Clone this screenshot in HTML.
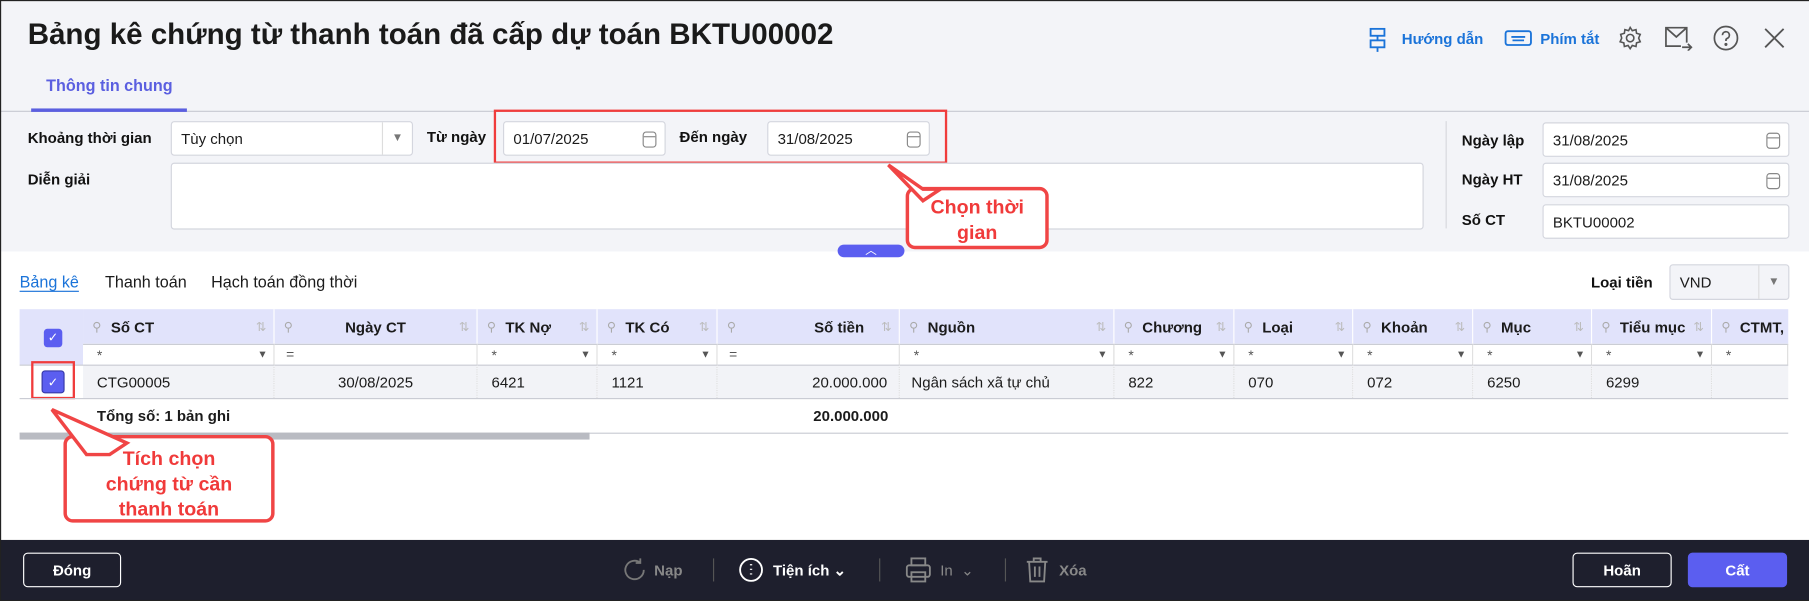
<!DOCTYPE html>
<html><head><meta charset="utf-8"><style>
*{box-sizing:border-box;margin:0;padding:0}
html,body{width:1809px;height:601px;overflow:hidden;background:#fff}
#w{position:absolute;left:0;top:0;width:1568px;height:521px;transform:scale(1.15370);transform-origin:0 0;font-family:"Liberation Sans",sans-serif;color:#1b1b1b;background:#fff}
.a{position:absolute}
.hdr{left:0;top:0;width:1568px;height:218px;background:#f3f4f8}
.lbl{font-size:13px;font-weight:bold;color:#111}
.inp{background:#fff;border:1px solid #d4d6de;border-radius:3px;font-size:13px;padding:0 8px;display:flex;align-items:center}
.cal{position:absolute;right:7px;top:8px;width:12px;height:14px;border:1.3px solid #888;border-radius:3px}
.cal:before{content:"";position:absolute;left:0;right:0;top:3px;border-top:1.3px solid #888}
.red{border:2px solid #f03c3c}
.call{background:#fff;border:3px solid #f04545;border-radius:8px;color:#f03a3a;font-weight:bold;font-size:17px;text-align:center;line-height:22px}
.th{top:268px;height:30px;background:#e1e3fb;font-size:13px;font-weight:bold;display:flex;align-items:center;border-right:1px solid #fff}
.fr{top:298px;height:18px;background:#fff;border-top:1px solid #c9cbd3;border-right:1px solid #ddd;font-size:12px;color:#555}
.td{top:316px;height:29px;background:#f2f3f7;font-size:13px;display:flex;align-items:center;border-top:1px solid #c9cbd3;border-right:1px dotted #ddd}
.pin{color:#aaa;font-weight:normal;font-size:11px;margin:0 8px 0 8px}
.srt{position:absolute;right:6px;color:#bbb;font-weight:normal;font-size:11px}
.ft{left:0;top:468px;width:1568px;height:53px;background:#1e1f2d}
.btn{border:1.5px solid #fff;border-radius:4px;color:#fff;font-size:13px;font-weight:bold;display:flex;align-items:center;justify-content:center}
.ftx{color:#fff;font-size:13px;font-weight:bold;top:487px}
.sep{top:484px;width:1px;height:20px;background:#555}
.chk{width:16px;height:16px;background:#5b5ef0;border-radius:3px;color:#fff;font-size:11px;text-align:center;line-height:16px}
</style></head><body><div id="w">
<div class="a hdr"></div>
<div class="a" style="left:0;top:0;width:1568px;height:521px;border:1px solid #222;border-right:none;z-index:5;pointer-events:none"></div>
<div class="a" style="left:24px;top:16px;font-size:25.6px;font-weight:bold;color:#1a1a1a">Bảng kê chứng từ thanh toán đã cấp dự toán BKTU00002</div>
<svg class="a" style="left:1185px;top:24px" width="20" height="22" viewBox="0 0 20 22" fill="none" stroke="#1a73d9" stroke-width="1.6"><rect x="3" y="1" width="12" height="6"/><rect x="3" y="11" width="12" height="6"/><path d="M9 7v4M9 17v4"/></svg>
<div class="a" style="left:1215px;top:26px;color:#1a73d9;font-size:13px;font-weight:bold">Hướng dẫn</div>
<svg class="a" style="left:1304px;top:26px" width="24" height="18" viewBox="0 0 24 18" fill="none" stroke="#1a73d9" stroke-width="1.6"><rect x="1" y="1" width="22" height="12" rx="2"/><path d="M6 6h12M7 9h10"/></svg>
<div class="a" style="left:1335px;top:26px;color:#1a73d9;font-size:13px;font-weight:bold">Phím tắt</div>
<svg class="a" style="left:1402px;top:22px" width="22" height="22" viewBox="0 0 24 24" fill="none" stroke="#555" stroke-width="1.5"><circle cx="12" cy="12" r="3.5"/><path d="M12 2l2 3 3.5-1 .5 3.5 3.5 1-1.5 3.5 1.5 3.5-3.5 1-.5 3.5-3.5-1-2 3-2-3-3.5 1-.5-3.5-3.5-1 1.5-3.5L3 8.5l3.5-1L7 4l3.5 1z"/></svg>
<svg class="a" style="left:1443px;top:22px" width="26" height="22" viewBox="0 0 26 22" fill="none" stroke="#555" stroke-width="1.5"><path d="M19 15V2H1v16h13M1 2l9 8 9-8M15 19h8M20 16l3 3-3 3"/></svg>
<svg class="a" style="left:1485px;top:22px" width="22" height="22" viewBox="0 0 22 22" fill="none" stroke="#555" stroke-width="1.5"><circle cx="11" cy="11" r="10"/><path d="M8 8.5a3 3 0 1 1 4 2.8c-1 .4-1 1-1 2.2"/><circle cx="11" cy="16.5" r=".6" fill="#555"/></svg>
<svg class="a" style="left:1528px;top:23px" width="20" height="20" viewBox="0 0 20 20" stroke="#555" stroke-width="1.6"><path d="M2 2l16 16M18 2L2 18"/></svg>
<div class="a" style="left:40px;top:66px;color:#5b5fe0;font-size:14px;font-weight:bold">Thông tin chung</div>
<div class="a" style="left:0;top:96px;width:1568px;height:1px;background:#c8cad2"></div>
<div class="a" style="left:27px;top:94px;width:135px;height:3px;background:#5b5fe0"></div>
<div class="a lbl" style="left:24px;top:112px">Khoảng thời gian</div>
<div class="a inp" style="left:148px;top:105px;width:210px;height:30px">Tùy chọn<div style="position:absolute;right:0;top:0;width:26px;height:28px;border-left:1px solid #ddd;color:#777;font-size:10px;text-align:center;line-height:28px">▼</div></div>
<div class="a lbl" style="left:370px;top:111px">Từ ngày</div>
<div class="a inp" style="left:436px;top:105px;width:141px;height:30px">01/07/2025<div class="cal"></div></div>
<div class="a lbl" style="left:589px;top:111px">Đến ngày</div>
<div class="a inp" style="left:665px;top:105px;width:141px;height:30px">31/08/2025<div class="cal"></div></div>
<div class="a red" style="left:428px;top:95px;width:393px;height:47px;border-width:2px"></div>
<div class="a lbl" style="left:24px;top:148px">Diễn giải</div>
<div class="a inp" style="left:148px;top:141px;width:1086px;height:58px"></div>
<div class="a" style="left:1253px;top:105px;width:1px;height:93px;background:#d6d8de"></div>
<div class="a lbl" style="left:1267px;top:114px">Ngày lập</div>
<div class="a inp" style="left:1337px;top:106px;width:214px;height:30px">31/08/2025<div class="cal"></div></div>
<div class="a lbl" style="left:1267px;top:148px">Ngày HT</div>
<div class="a inp" style="left:1337px;top:141px;width:214px;height:30px">31/08/2025<div class="cal"></div></div>
<div class="a lbl" style="left:1267px;top:183px">Số CT</div>
<div class="a inp" style="left:1337px;top:177px;width:214px;height:30px">BKTU00002</div>
<div class="a" style="left:726px;top:212px;width:58px;height:11px;background:#5b5ef0;border-radius:6px 6px 6px 6px;color:#fff;font-size:10px;text-align:center;line-height:12px">︿</div>
<svg class="a" style="left:760px;top:140px;z-index:3" width="60" height="40"><path d="M10 3L40 24 55 24 40 34z" fill="#fff" stroke="#f04545" stroke-width="3"/></svg>
<div class="a call" style="left:785px;top:162px;width:124px;height:54px;padding-top:4px;z-index:2">Chọn thời<br>gian</div>
<div class="a" style="left:17px;top:236px;color:#1a73d9;font-size:14px;text-decoration:underline;text-underline-offset:3px">Bảng kê</div>
<div class="a" style="left:91px;top:236px;font-size:14px">Thanh toán</div>
<div class="a" style="left:183px;top:236px;font-size:14px">Hạch toán đồng thời</div>
<div class="a lbl" style="left:1379px;top:237px">Loại tiền</div>
<div class="a inp" style="left:1447px;top:229px;width:104px;height:31px;background:#f3f4f8">VND<div style="position:absolute;right:0;top:0;width:26px;height:29px;border-left:1px solid #ddd;color:#777;font-size:10px;text-align:center;line-height:29px">▼</div></div>

<div class="a" style="left:17px;top:268px;width:55px;height:48px;background:#e1e3fb"></div>
<div class="a chk" style="left:38px;top:285px">✓</div>
<div class="a td" style="left:17px;width:55px;background:#fff;border-right:none"></div>
<div class="a chk" style="left:36px;top:321px;width:20px;height:20px;line-height:20px;border:1.5px solid #3638a8">✓</div>
<div class="a red" style="left:27px;top:313px;width:38px;height:33px;border-width:2px"></div>

<div class="a th" style="left:72px;width:166px"><span class="pin">⚲</span>Số CT<span class="srt">⇅</span></div>
<div class="a th" style="left:238px;width:176px;justify-content:center"><span class="pin" style="position:absolute;left:0">⚲</span>Ngày CT<span class="srt">⇅</span></div>
<div class="a th" style="left:414px;width:104px"><span class="pin">⚲</span>TK Nợ<span class="srt">⇅</span></div>
<div class="a th" style="left:518px;width:104px"><span class="pin">⚲</span>TK Có<span class="srt">⇅</span></div>
<div class="a th" style="left:622px;width:158px;justify-content:flex-end;padding-right:30px"><span class="pin" style="position:absolute;left:0">⚲</span>Số tiền<span class="srt">⇅</span></div>
<div class="a th" style="left:780px;width:186px"><span class="pin">⚲</span>Nguồn<span class="srt">⇅</span></div>
<div class="a th" style="left:966px;width:104px"><span class="pin">⚲</span>Chương<span class="srt">⇅</span></div>
<div class="a th" style="left:1070px;width:103px"><span class="pin">⚲</span>Loại<span class="srt">⇅</span></div>
<div class="a th" style="left:1173px;width:104px"><span class="pin">⚲</span>Khoản<span class="srt">⇅</span></div>
<div class="a th" style="left:1277px;width:103px"><span class="pin">⚲</span>Mục<span class="srt">⇅</span></div>
<div class="a th" style="left:1380px;width:104px"><span class="pin">⚲</span>Tiểu mục<span class="srt">⇅</span></div>
<div class="a th" style="left:1484px;width:66px;border-right:none"><span class="pin">⚲</span>CTMT,</div>

<div class="a fr" style="left:72px;width:166px"><span style="position:absolute;left:12px;top:2px">*</span><span style="position:absolute;right:5px;top:3px;font-size:9px">▼</span></div>
<div class="a fr" style="left:238px;width:176px"><span style="position:absolute;left:10px;top:1px">=</span></div>
<div class="a fr" style="left:414px;width:104px"><span style="position:absolute;left:12px;top:2px">*</span><span style="position:absolute;right:5px;top:3px;font-size:9px">▼</span></div>
<div class="a fr" style="left:518px;width:104px"><span style="position:absolute;left:12px;top:2px">*</span><span style="position:absolute;right:5px;top:3px;font-size:9px">▼</span></div>
<div class="a fr" style="left:622px;width:158px"><span style="position:absolute;left:10px;top:1px">=</span></div>
<div class="a fr" style="left:780px;width:186px"><span style="position:absolute;left:12px;top:2px">*</span><span style="position:absolute;right:5px;top:3px;font-size:9px">▼</span></div>
<div class="a fr" style="left:966px;width:104px"><span style="position:absolute;left:12px;top:2px">*</span><span style="position:absolute;right:5px;top:3px;font-size:9px">▼</span></div>
<div class="a fr" style="left:1070px;width:103px"><span style="position:absolute;left:12px;top:2px">*</span><span style="position:absolute;right:5px;top:3px;font-size:9px">▼</span></div>
<div class="a fr" style="left:1173px;width:104px"><span style="position:absolute;left:12px;top:2px">*</span><span style="position:absolute;right:5px;top:3px;font-size:9px">▼</span></div>
<div class="a fr" style="left:1277px;width:103px"><span style="position:absolute;left:12px;top:2px">*</span><span style="position:absolute;right:5px;top:3px;font-size:9px">▼</span></div>
<div class="a fr" style="left:1380px;width:104px"><span style="position:absolute;left:12px;top:2px">*</span><span style="position:absolute;right:5px;top:3px;font-size:9px">▼</span></div>
<div class="a fr" style="left:1484px;width:66px"><span style="position:absolute;left:12px;top:2px">*</span></div>

<div class="a td" style="left:72px;width:166px;padding-left:12px">CTG00005</div>
<div class="a td" style="left:238px;width:176px;justify-content:center">30/08/2025</div>
<div class="a td" style="left:414px;width:104px;padding-left:12px">6421</div>
<div class="a td" style="left:518px;width:104px;padding-left:12px">1121</div>
<div class="a td" style="left:622px;width:158px;justify-content:flex-end;padding-right:10px">20.000.000</div>
<div class="a td" style="left:780px;width:186px;padding-left:10px">Ngân sách xã tự chủ</div>
<div class="a td" style="left:966px;width:104px;padding-left:12px">822</div>
<div class="a td" style="left:1070px;width:103px;padding-left:12px">070</div>
<div class="a td" style="left:1173px;width:104px;padding-left:12px">072</div>
<div class="a td" style="left:1277px;width:103px;padding-left:12px">6250</div>
<div class="a td" style="left:1380px;width:104px;padding-left:12px">6299</div>
<div class="a td" style="left:1484px;width:66px;border-right:none"></div>
<div class="a" style="left:17px;top:345px;width:1533px;height:1px;background:#c9cbd3"></div>
<div class="a" style="left:84px;top:353px;font-size:13px;font-weight:bold">Tổng số: 1 bản ghi</div>
<div class="a" style="left:622px;top:353px;width:148px;text-align:right;font-size:13px;font-weight:bold">20.000.000</div>
<div class="a" style="left:17px;top:375px;width:1533px;height:1px;background:#c9cbd3"></div>
<div class="a" style="left:17px;top:375px;width:494px;height:6px;background:#b9bbc2"></div>
<svg class="a" style="left:40px;top:350px;z-index:3" width="90" height="50"><path d="M5 5L70 34 55 44 35 44z" fill="#fff" stroke="#f04545" stroke-width="3"/></svg>
<div class="a call" style="left:55px;top:377px;width:183px;height:76px;padding-top:7px;z-index:2">Tích chọn<br>chứng từ cần<br>thanh toán</div>

<div class="a ft"></div>
<div class="a btn" style="left:20px;top:479px;width:85px;height:30px">Đóng</div>
<svg class="a" style="left:538px;top:482px" width="24" height="24" viewBox="0 0 24 24" fill="none" stroke="#777" stroke-width="1.6"><path d="M20 12a8 8 0 1 1-3-6.2M17 2v4h-4"/></svg>
<div class="a ftx" style="left:567px;color:#888">Nạp</div>
<div class="a sep" style="left:618px"></div>
<svg class="a" style="left:640px;top:483px" width="22" height="22" viewBox="0 0 22 22" fill="none" stroke="#fff" stroke-width="1.6"><circle cx="11" cy="11" r="9.5"/><path d="M11 6v1M11 10v1M11 14v1" stroke-width="2"/></svg>
<div class="a ftx" style="left:670px">Tiện ích ⌄</div>
<div class="a sep" style="left:762px"></div>
<svg class="a" style="left:785px;top:482px" width="22" height="24" viewBox="0 0 22 24" fill="none" stroke="#888" stroke-width="1.6"><rect x="5" y="2" width="12" height="6"/><rect x="1" y="8" width="20" height="10" rx="2"/><rect x="5" y="14" width="12" height="8"/></svg>
<div class="a ftx" style="left:815px;color:#888;font-weight:normal">In &nbsp;⌄</div>
<div class="a sep" style="left:871px"></div>
<svg class="a" style="left:889px;top:482px" width="20" height="24" viewBox="0 0 20 24" fill="none" stroke="#888" stroke-width="1.6"><path d="M1 5h18M7 5V2h6v3M3 5l1 17h12l1-17M8 9v9M12 9v9"/></svg>
<div class="a ftx" style="left:918px;color:#888">Xóa</div>
<div class="a btn" style="left:1363px;top:479px;width:86px;height:30px">Hoãn</div>
<div class="a btn" style="left:1463px;top:479px;width:86px;height:30px;background:#5b5ef0;border-color:#5b5ef0">Cất</div>
</div></body></html>
